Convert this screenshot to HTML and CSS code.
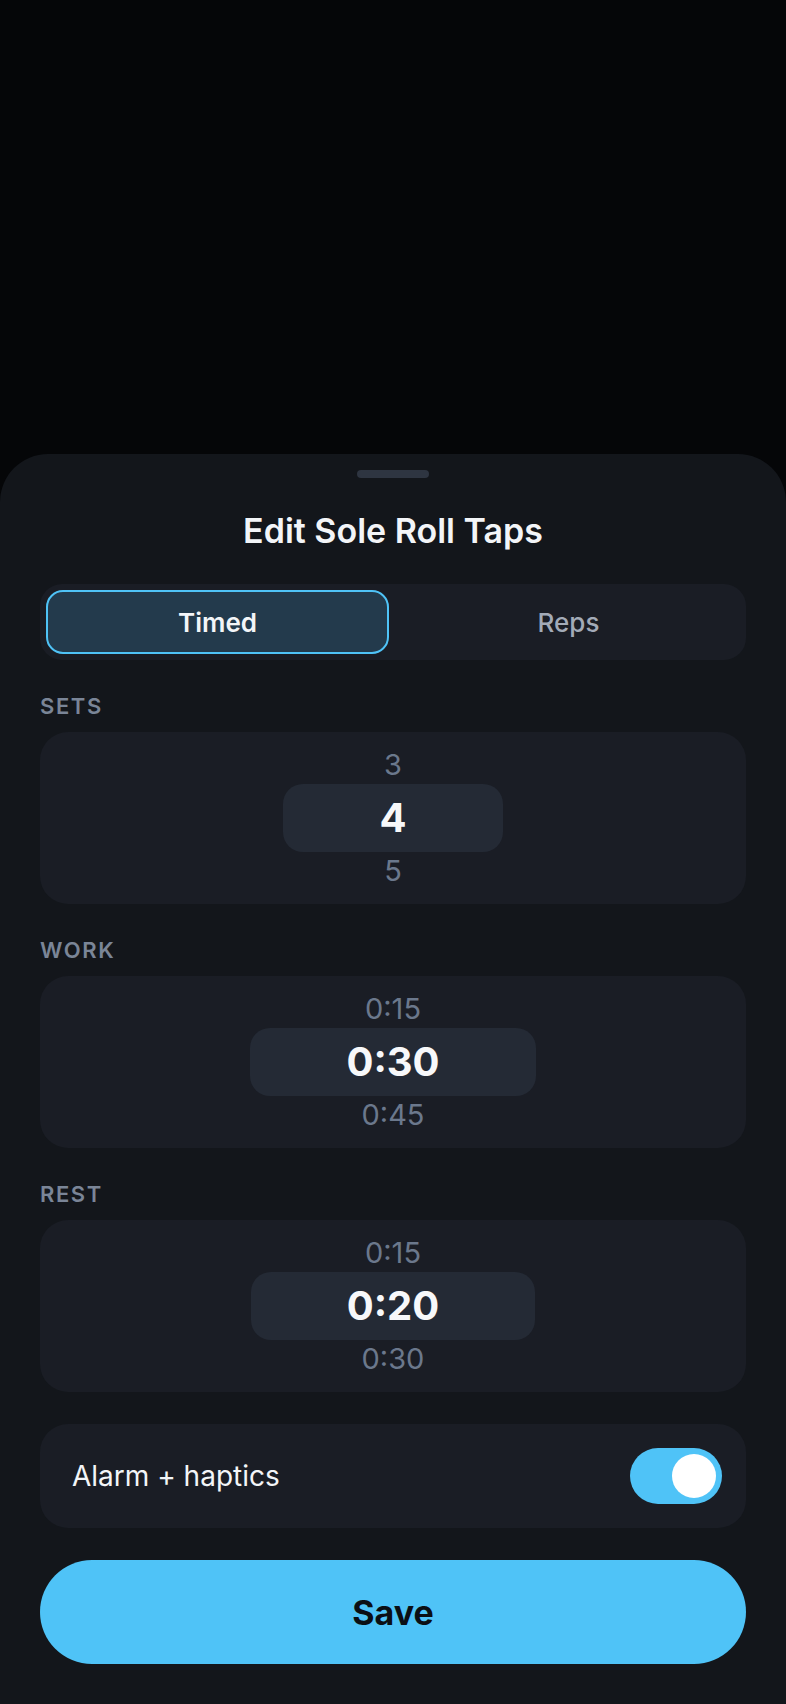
FILE: index.html
```html
<!DOCTYPE html>
<html lang="en">
<head>
<meta charset="utf-8">
<meta name="viewport" content="width=786">
<title>Edit Sole Roll Taps</title>
<link rel="stylesheet" href="styles.css">
</head>
<body>
<div class="screen">
  <div class="backdrop"></div>
  <section class="sheet">
    <div class="handle"></div>
    <h1 class="title">Edit Sole Roll Taps</h1>

    <div class="segmented">
      <button class="seg seg-active">Timed</button>
      <button class="seg">Reps</button>
    </div>

    <div class="field">
      <div class="label">SETS</div>
      <div class="picker">
        <div class="opt">3</div>
        <div class="sel"><span class="sel-box">4</span></div>
        <div class="opt">5</div>
      </div>
    </div>

    <div class="field">
      <div class="label">WORK</div>
      <div class="picker">
        <div class="opt">0:15</div>
        <div class="sel"><span class="sel-box">0:30</span></div>
        <div class="opt">0:45</div>
      </div>
    </div>

    <div class="field">
      <div class="label">REST</div>
      <div class="picker">
        <div class="opt">0:15</div>
        <div class="sel"><span class="sel-box">0:20</span></div>
        <div class="opt">0:30</div>
      </div>
    </div>

    <div class="toggle-row">
      <span class="toggle-label">Alarm + haptics</span>
      <span class="switch"><span class="knob"></span></span>
    </div>

    <button class="save">Save</button>
  </section>
</div>
</body>
</html>
```
FILE: styles.css
```css
* { box-sizing: border-box; }

html, body {
  margin: 0;
  padding: 0;
  background: #050608;
  font-family: Inter, "Noto Sans", "Liberation Sans", sans-serif;
}

.screen {
  min-height: 100vh;
  display: flex;
  flex-direction: column;
}

.backdrop {
  flex: 1;
  background: #050608;
}

.sheet {
  background: #13161b;
  border-radius: 48px 48px 0 0;
  padding: 16px 40px 40px;
  display: flex;
  flex-direction: column;
}

.handle {
  align-self: center;
  width: 72px;
  height: 8px;
  border-radius: 4px;
  background: #2e3541;
}

.title {
  margin: 34px 0 0;
  text-align: center;
  font-size: 34px;
  line-height: 38px;
  font-weight: 600;
  color: #f3f5f8;
}

.segmented {
  margin-top: 34px;
  height: 76px;
  padding: 6px;
  border-radius: 22px;
  background: #1a1d25;
  display: grid;
  grid-template-columns: 1fr 1fr;
  gap: 8px;
}

.seg {
  border: 2px solid transparent;
  background: transparent;
  border-radius: 17px;
  font-family: inherit;
  font-size: 26px;
  font-weight: 500;
  color: #a3abb8;
  padding: 0;
}

.seg-active {
  background: #233a4c;
  border-color: #4fc3f7;
  color: #f3f5f8;
  font-weight: 600;
}

.field {
  margin-top: 33px;
}

.label {
  font-size: 22px;
  line-height: 26px;
  font-weight: 600;
  letter-spacing: 1.6px;
  color: #7a8597;
}

.picker {
  margin-top: 13px;
  background: #1a1d25;
  border-radius: 28px;
  padding: 16px 0;
  display: flex;
  flex-direction: column;
  align-items: center;
  gap: 2px;
}

.opt {
  font-size: 29px;
  line-height: 34px;
  color: #6b788c;
}

.sel {
  height: 68px;
  display: flex;
  justify-content: center;
}

.sel-box {
  display: block;
  height: 68px;
  line-height: 68px;
  padding: 0 96px;
  border-radius: 20px;
  background: #242a35;
  font-size: 40px;
  font-weight: 700;
  color: #f7f8fa;
}

.toggle-row {
  margin-top: 32px;
  height: 104px;
  background: #1a1d25;
  border-radius: 28px;
  padding: 0 24px 0 32px;
  display: flex;
  align-items: center;
  justify-content: space-between;
}

.toggle-label {
  font-size: 28px;
  font-weight: 400;
  color: #f3f5f8;
}

.switch {
  width: 92px;
  height: 56px;
  border-radius: 28px;
  background: #4fc3f7;
  padding: 6px;
  display: flex;
  justify-content: flex-end;
}

.knob {
  width: 44px;
  height: 44px;
  border-radius: 50%;
  background: #ffffff;
}

.save {
  margin-top: 32px;
  height: 104px;
  border: none;
  border-radius: 52px;
  background: #4fc3f7;
  font-family: inherit;
  font-size: 34px;
  font-weight: 700;
  color: #0b0f14;
}
```
